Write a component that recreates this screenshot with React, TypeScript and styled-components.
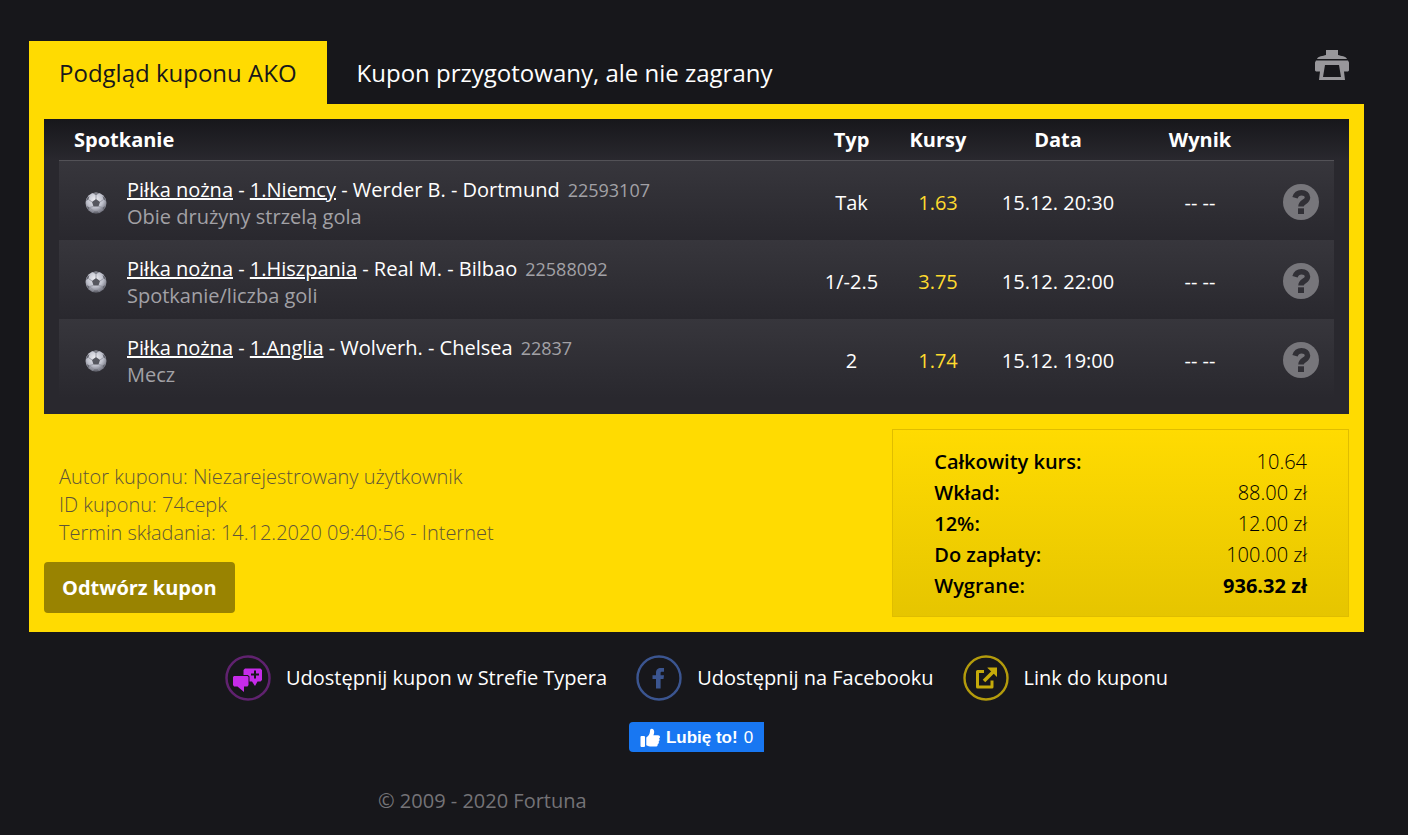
import React from "react";
import styled, { createGlobalStyle } from "styled-components";

const GlobalStyle = createGlobalStyle`
  * { box-sizing: border-box; }
  body {
    margin: 0;
    background: #17171b;
    color: #fff;
    font-family: "Open Sans", "Noto Sans", sans-serif;
    font-size: 20px;
    line-height: 28px;
  }
  a { color: inherit; }
`;

const Page = styled.div`
  padding: 41px 44px 20px 29px;
`;

const Header = styled.header`
  display: flex;
  align-items: flex-start;
  height: 63px;
  padding-right: 15px;
  font-size: 24px;
  line-height: 33px;
`;

const Title = styled.h1`
  margin: 0;
  padding: 15px 30px;
  background: #ffdb01;
  color: #17171b;
  font: inherit;
`;

const Status = styled.p`
  flex: 1;
  margin: 0;
  padding: 15px 30px;
`;

const PrintButton = styled.button`
  display: block;
  margin: 9px 0 0;
  padding: 0;
  border: 0;
  background: none;
  cursor: pointer;
  svg { display: block; }
`;

const Coupon = styled.main`
  padding: 15px;
  background: #ffdb01;
`;

const Matches = styled.section`
  padding: 0 15px 16px;
  background: linear-gradient(#17171b, #29282e 41px);
`;

const Table = styled.table`
  width: 100%;
  border-collapse: separate;
  border-spacing: 0;
  table-layout: fixed;
`;

const Col = styled.col<{ $w?: number }>`
  width: ${(p) => (p.$w ? `${p.$w}px` : "auto")};
`;

const HeadCell = styled.th<{ $left?: boolean }>`
  height: 42px;
  padding: ${(p) => (p.$left ? "0 15px" : "0")};
  border-bottom: 1px solid #535257;
  text-align: ${(p) => (p.$left ? "left" : "center")};
  font-weight: 700;
`;

const MatchRow = styled.tr`
  height: 79px;
  background: linear-gradient(#37363c, #29282e);
`;

const Cell = styled.td<{ $color?: string }>`
  padding: 4px 0 0;
  text-align: center;
  vertical-align: middle;
  color: ${(p) => p.$color ?? "#fff"};
  white-space: nowrap;
`;

const IconCell = styled(Cell)<{ $end?: boolean }>`
  padding: 2px ${(p) => (p.$end ? 15 : 20)}px 0 0;
  text-align: right;
  svg { display: inline-block; vertical-align: middle; }
`;

const MatchCell = styled(Cell)`
  text-align: left;
  line-height: 27px;
`;

const Code = styled.span`
  margin-left: 8px;
  color: #a2a1a6;
  font-size: 18px;
  line-height: 20px;
`;

const Market = styled.div`
  color: #a2a1a6;
`;

const Bottom = styled.div`
  display: flex;
  justify-content: space-between;
  align-items: flex-end;
  padding-top: 15px;
`;

const Meta = styled.div`
  padding-bottom: 4px;
`;

const MetaLine = styled.p`
  margin: 0;
  padding-left: 15px;
  color: #5f5638;
  font-weight: 300;
`;

const Replay = styled.button`
  height: 51px;
  margin-top: 15px;
  padding: 0 18px;
  border: 0;
  border-radius: 4px;
  background: #998301;
  color: #fff;
  font: inherit;
  font-weight: 700;
  cursor: pointer;
`;

const Totals = styled.dl`
  width: 35%;
  margin: 0;
  padding: 16px 41px 15px;
  border: 1px solid #e0bd00;
  background: linear-gradient(#ffdb01, #e6c500);
  color: #000;
`;

const Total = styled.div`
  display: flex;
  justify-content: space-between;
  line-height: 31px;
`;

const Label = styled.dt`
  font-weight: 600;
`;

const Value = styled.dd<{ $strong?: boolean }>`
  margin: 0;
  font-weight: ${(p) => (p.$strong ? 700 : 300)};
`;

const Shares = styled.nav`
  display: flex;
  justify-content: center;
  gap: 29px;
  padding-top: 23px;
`;

const Share = styled.a`
  display: flex;
  align-items: center;
  gap: 15px;
  text-decoration: none;
  svg { display: block; }
`;

const LikeArea = styled.div`
  display: flex;
  justify-content: center;
  padding-top: 21px;
`;

const Like = styled.button`
  display: flex;
  align-items: center;
  gap: 6px;
  height: 30px;
  padding: 2px 11px 0;
  border: 0;
  border-radius: 4px 0 0 4px;
  background: #1877f2;
  color: #fff;
  font: 700 17px "Liberation Sans", Arial, sans-serif;
  cursor: pointer;
`;

const LikeCount = styled.span`
  font-weight: 400;
`;

const Footer = styled.footer`
  padding: 35px 0 0 349px;
  color: #747377;
`;

const PrintIcon = () => (
  <svg width="34" height="30" viewBox="0 0 34 30" fill="#98979b" aria-hidden="true">
    <path d="M11 0h12v5c3 1 8 1 9 4H2c1-3 6-3 9-4z" />
    <path
      fillRule="evenodd"
      d="M1 10.500h32l1 2v8l-1 1h-4l1 8.500H4l1-8.500H1l-1-1v-8zM10 15L8 27h18L24 15z"
    />
  </svg>
);

const Ball = () => (
  <svg width="22" height="22" viewBox="0 0 22 22" aria-hidden="true">
    <defs>
      <radialGradient id="ball" cx="45%" cy="35%" r="65%">
        <stop offset="0" stopColor="#f0f0f4" />
        <stop offset="0.6" stopColor="#bdbfca" />
        <stop offset="1" stopColor="#70717c" />
      </radialGradient>
    </defs>
    <circle cx="11" cy="11" r="10.5" fill="url(#ball)" />
    <path d="M11 7l4 3-1.5 4.5h-5L7 10z" fill="#56575f" />
    <path
      d="M7.500 1.200L11 3l3.500-1.800zM1 9l2.500-1.500L4.500 4 1.800 6zM21 9l-2.500-1.500-1-3.500 2.700 2zM4 18.500l.5-3L1.500 14zM18 18.500l-.5-3 3-1.500zM8 21l1-1.500h4l1 1.500z"
      fill="#686973"
    />
    <path
      d="M11 3v4M3.500 7.500L7 10M18.500 7.500L15 10M4.500 15.500l4-1M17.500 15.500l-4-1M4.500 15.500l4.500 4M17.500 15.500l-4.500 4"
      stroke="#8d8e99"
      strokeWidth="0.8"
      fill="none"
    />
  </svg>
);

const Unknown = () => (
  <svg width="36" height="36" viewBox="0 0 36 36" role="img" aria-label="Wynik nieznany">
    <circle cx="18" cy="18" r="18" fill="#77767b" />
    <path
      d="M12 13.700C13 10.300 15.300 8.700 18.500 8.700c3.700 0 6 2 6 4.800 0 4.500-6.500 4.300-6.500 9"
      stroke="#313036"
      strokeWidth="5.500"
      fill="none"
    />
    <path d="M15 24.300h6V30h-6z" fill="#313036" />
  </svg>
);

const TipsIcon = () => (
  <svg width="46" height="46" viewBox="0 0 46 46" aria-hidden="true">
    <circle cx="23" cy="23" r="21.500" stroke="#60226f" strokeWidth="2.500" fill="none" />
    <path d="M20 13.500h15.500l1.500 1.500v10L35.500 26.500h-3L30 31l-3-4.500h-7L18.500 25V15z" fill="#c62be9" />
    <path
      d="M9 21h13.500l1 1v8l-1 1.500H19V37l-6.500-5.500H9L8 30v-8z"
      fill="#c62be9"
      stroke="#17171b"
      strokeWidth="2"
      paintOrder="stroke"
    />
    <path d="M30 15.500v8M26 19.500h8" stroke="#17171b" strokeWidth="2" />
  </svg>
);

const FacebookIcon = () => (
  <svg width="46" height="46" viewBox="0 0 46 46" aria-hidden="true">
    <circle cx="23" cy="23" r="21.500" stroke="#3b5590" strokeWidth="2.400" fill="none" />
    <path
      d="M20 33.500V24h-3.500v-3.700H20V18c0-3.600 1.900-5 4.800-5H28v3.800h-2c-1.100 0-1.400.5-1.400 1.400v2.100H28l-.5 3.700h-2.900v9.500z"
      fill="#3b5590"
    />
  </svg>
);

const LinkIcon = () => (
  <svg width="46" height="46" viewBox="0 0 46 46" aria-hidden="true">
    <circle cx="23" cy="23" r="21.500" stroke="#b39b0c" strokeWidth="2.400" fill="none" />
    <path d="M21 16.500h-6.500V32H29v-6.500" stroke="#c5aa0a" strokeWidth="3" strokeLinejoin="round" fill="none" />
    <path d="M21 26L31 16" stroke="#c5aa0a" strokeWidth="3.500" />
    <path d="M24.500 12.500H34V22l-3-3-6.500-6z" fill="#c5aa0a" />
  </svg>
);

const ThumbIcon = () => (
  <svg width="20" height="20" viewBox="0 0 20 20" fill="#fff" aria-hidden="true">
    <path d="M1.500 8H4a1 1 0 0 1 1 1v9a1 1 0 0 1-1 1H1.500a1 1 0 0 1-1-1V9a1 1 0 0 1 1-1z" />
    <path d="M6.300 9.500C8.500 8.300 9.800 6 10 3.300 10.100 1.600 10.500.8 11.700.8c1.700 0 2.500 1.500 2.500 3.200 0 1.200-.4 2.300-.8 3.200H18c1.200 0 2 .8 2 1.700 0 .8-.4 1.400-1 1.700.5.4.7.9.6 1.500-.1.700-.5 1.200-1 1.500.3.4.4.900.2 1.400-.2.600-.6 1-1.100 1.200.2 1.400-.6 2.300-2.200 2.300h-4c-2 0-3.600-.5-5.200-1.300z" />
  </svg>
);

const matches = [
  { league: "1.Niemcy", teams: "Werder B. - Dortmund", code: "22593107", market: "Obie drużyny strzelą gola", pick: "Tak", odds: "1.63", date: "15.12. 20:30" },
  { league: "1.Hiszpania", teams: "Real M. - Bilbao", code: "22588092", market: "Spotkanie/liczba goli", pick: "1/-2.5", odds: "3.75", date: "15.12. 22:00" },
  { league: "1.Anglia", teams: "Wolverh. - Chelsea", code: "22837", market: "Mecz", pick: "2", odds: "1.74", date: "15.12. 19:00" },
];

const totals = [
  { label: "Całkowity kurs:", value: "10.64" },
  { label: "Wkład:", value: "88.00 zł" },
  { label: "12%:", value: "12.00 zł" },
  { label: "Do zapłaty:", value: "100.00 zł" },
  { label: "Wygrane:", value: "936.32 zł", strong: true },
];

export default function App() {
  return (
    <>
      <GlobalStyle />
      <Page>
        <Header>
          <Title>Podgląd kuponu AKO</Title>
          <Status>Kupon przygotowany, ale nie zagrany</Status>
          <PrintButton type="button" aria-label="Drukuj">
            <PrintIcon />
          </PrintButton>
        </Header>
        <Coupon>
          <Matches>
            <Table>
              <colgroup>
                <Col $w={68} />
                <Col />
                <Col $w={87} />
                <Col $w={86} />
                <Col $w={154} />
                <Col $w={130} />
                <Col $w={69} />
              </colgroup>
              <thead>
                <tr>
                  <HeadCell $left colSpan={2}>Spotkanie</HeadCell>
                  <HeadCell>Typ</HeadCell>
                  <HeadCell>Kursy</HeadCell>
                  <HeadCell>Data</HeadCell>
                  <HeadCell>Wynik</HeadCell>
                  <HeadCell />
                </tr>
              </thead>
              <tbody>
                {matches.map((m) => (
                  <MatchRow key={m.code}>
                    <IconCell><Ball /></IconCell>
                    <MatchCell>
                      <a href="#sport">Piłka nożna</a> - <a href="#league">{m.league}</a> - {m.teams}
                      <Code>{m.code}</Code>
                      <Market>{m.market}</Market>
                    </MatchCell>
                    <Cell>{m.pick}</Cell>
                    <Cell $color="#ffdb2e">{m.odds}</Cell>
                    <Cell>{m.date}</Cell>
                    <Cell>-- --</Cell>
                    <IconCell $end><Unknown /></IconCell>
                  </MatchRow>
                ))}
              </tbody>
            </Table>
          </Matches>
          <Bottom>
            <Meta>
              <MetaLine>Autor kuponu: Niezarejestrowany użytkownik</MetaLine>
              <MetaLine>ID kuponu: 74cepk</MetaLine>
              <MetaLine>Termin składania: 14.12.2020 09:40:56 - Internet</MetaLine>
              <Replay type="button">Odtwórz kupon</Replay>
            </Meta>
            <Totals>
              {totals.map((t) => (
                <Total key={t.label}>
                  <Label>{t.label}</Label>
                  <Value $strong={t.strong}>{t.value}</Value>
                </Total>
              ))}
            </Totals>
          </Bottom>
        </Coupon>
        <Shares>
          <Share href="#tips"><TipsIcon />Udostępnij kupon w Strefie Typera</Share>
          <Share href="#facebook"><FacebookIcon />Udostępnij na Facebooku</Share>
          <Share href="#link"><LinkIcon />Link do kuponu</Share>
        </Shares>
        <LikeArea>
          <Like type="button">
            <ThumbIcon />
            <span>Lubię to!</span>
            <LikeCount>0</LikeCount>
          </Like>
        </LikeArea>
        <Footer>© 2009 - 2020 Fortuna</Footer>
      </Page>
    </>
  );
}
